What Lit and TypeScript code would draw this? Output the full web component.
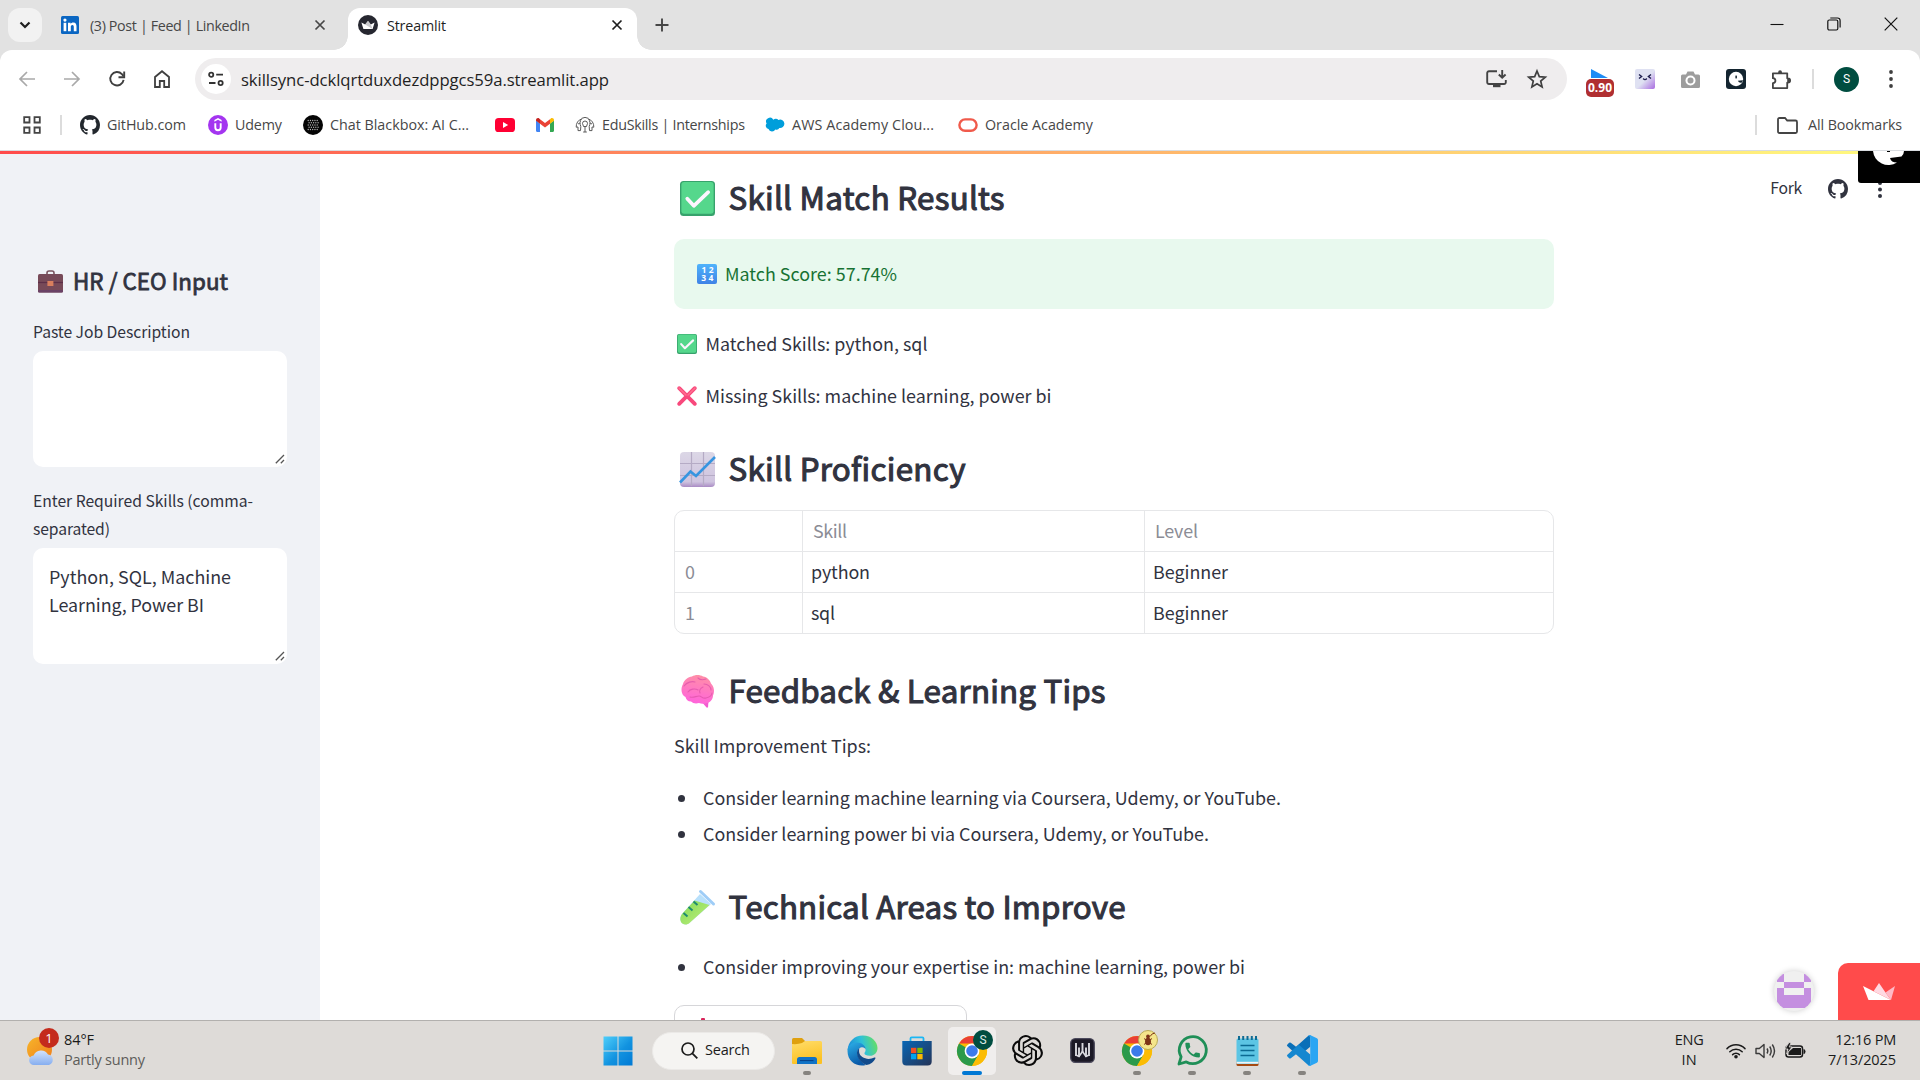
import { LitElement, html, css, svg, TemplateResult, SVGTemplateResult } from "lit";
import { customElement, property, query, state } from "lit/decorators.js";
import { styleMap } from "lit/directives/style-map.js";

/* A single line of text whose tracking is adjusted so that it spans a given width. */
@customElement("fit-text")
class FitText extends LitElement {
  @property() text = "";
  @property({ type: Number }) w = 0;
  @state() private spacing = 0;
  @query("span") private span!: HTMLSpanElement;

  static styles = css`
    :host { display: block; white-space: pre; flex: none; }
    span { display: inline-block; }
  `;

  firstUpdated() {
    const natural = this.span.getBoundingClientRect().width;
    this.spacing = (this.w - natural) / Math.max(1, this.text.length - 1);
  }

  render() {
    return html`<span style=${styleMap({ letterSpacing: `${this.spacing}px` })}>${this.text}</span>`;
  }
}

const fit = (text: string, w: number, cls = "") => html`<fit-text class=${cls} .text=${text} .w=${w}></fit-text>`;

const icon = (w: number, h: number, box: string, body: SVGTemplateResult, cls = ""): TemplateResult =>
  html`<svg class="ic ${cls}" width=${w} height=${h} viewBox=${box} fill="none">${body}</svg>`;

const githubPath =
  "M8 0C3.58 0 0 3.58 0 8c0 3.54 2.29 6.53 5.47 7.59.4.07.55-.17.55-.38 0-.19-.01-.82-.01-1.49-2.01.37-2.53-.49-2.69-.94-.09-.23-.48-.94-.82-1.13-.28-.15-.68-.52-.01-.53.63-.01 1.08.58 1.23.82.72 1.21 1.87.87 2.33.66.07-.52.28-.87.51-1.07-1.78-.2-3.64-.89-3.64-3.95 0-.87.31-1.59.82-2.15-.08-.2-.36-1.02.08-2.12 0 0 .67-.21 2.2.82.64-.18 1.32-.27 2-.27s1.36.09 2 .27c1.53-1.04 2.2-.82 2.2-.82.44 1.1.16 1.92.08 2.12.51.56.82 1.27.82 2.15 0 3.07-1.87 3.75-3.65 3.95.29.25.54.73.54 1.48 0 1.07-.01 1.93-.01 2.2 0 .21.15.46.55.38A8.01 8.01 0 0 0 16 8c0-4.42-3.58-8-8-8z";

const knotPath =
  "M22.2819 9.8211a5.9847 5.9847 0 0 0-.5157-4.9108 6.0462 6.0462 0 0 0-6.5098-2.9A6.0651 6.0651 0 0 0 4.9807 4.1818a5.9847 5.9847 0 0 0-3.9977 2.9 6.0462 6.0462 0 0 0 .7427 7.0966 5.98 5.98 0 0 0 .511 4.9107 6.051 6.051 0 0 0 6.5146 2.9001A5.9847 5.9847 0 0 0 13.2599 24a6.0557 6.0557 0 0 0 5.7718-4.2058 5.9894 5.9894 0 0 0 3.9977-2.9001 6.0557 6.0557 0 0 0-.7475-7.0729zm-9.022 12.6081a4.4755 4.4755 0 0 1-2.8764-1.0408l.1419-.0804 4.7783-2.7582a.7948.7948 0 0 0 .3927-.6813v-6.7369l2.02 1.1686a.071.071 0 0 1 .038.052v5.5826a4.504 4.504 0 0 1-4.4945 4.4944zm-9.6607-4.1254a4.4708 4.4708 0 0 1-.5346-3.0137l.142.0852 4.783 2.7582a.7712.7712 0 0 0 .7806 0l5.8428-3.3685v2.3324a.0804.0804 0 0 1-.0332.0615L9.74 19.9502a4.4992 4.4992 0 0 1-6.1408-1.6464zM2.3408 7.8956a4.485 4.485 0 0 1 2.3655-1.9728V11.6a.7664.7664 0 0 0 .3879.6765l5.8144 3.3543-2.0201 1.1685a.0757.0757 0 0 1-.071 0l-4.8303-2.7865A4.504 4.504 0 0 1 2.3408 7.872zm16.5963 3.8558L13.1038 8.364 15.1192 7.2a.0757.0757 0 0 1 .071 0l4.8303 2.7913a4.4944 4.4944 0 0 1-.6765 8.1042v-5.6772a.79.79 0 0 0-.407-.667zm2.0107-3.0231l-.142-.0852-4.7735-2.7818a.7759.7759 0 0 0-.7854 0L9.409 9.2297V6.8974a.0662.0662 0 0 1 .0284-.0615l4.8303-2.7866a4.4992 4.4992 0 0 1 6.6802 4.66zM8.3065 12.863l-2.02-1.1638a.0804.0804 0 0 1-.038-.0567V6.0742a4.4992 4.4992 0 0 1 7.3757-3.4537l-.142.0805L8.704 5.459a.7948.7948 0 0 0-.3927.6813zm1.0976-2.3654l2.602-1.4998 2.6069 1.4998v2.9994l-2.5974 1.4997-2.6067-1.4997Z";

const phonePath =
  "M6.6 10.8c1.4 2.8 3.8 5.1 6.6 6.6l2.2-2.2c.3-.3.7-.4 1-.2 1.1.4 2.3.6 3.6.6.6 0 1 .4 1 1V20c0 .6-.4 1-1 1-9.4 0-17-7.6-17-17 0-.6.4-1 1-1h3.5c.6 0 1 .4 1 1 0 1.2.2 2.5.6 3.6.1.3 0 .7-.2 1z";

/* ---------- browser icons ---------- */
const closeX = (color: string) => icon(12, 12, "0 0 12 12", svg`<path d="M1.5 1.5l9 9M10.5 1.5l-9 9" stroke=${color} stroke-width="1.7"/>`);
const crownDark = icon(20, 20, "0 0 20 20", svg`
  <circle cx="10" cy="10" r="10" fill="#262730"/>
  <path d="M3.4 7.6l3.8 2L10 6l2.8 3.6 3.8-2-2 6.4H5.4z" fill="#fff"/>
  <path d="M7.2 9.6L10 6l2.8 3.6L14.6 14z" fill="#c9c9cc"/>`);
const linkedIn = icon(18, 18, "0 0 18 18", svg`
  <rect width="18" height="18" rx="1.5" fill="#0a66c2"/>
  <rect x="2.6" y="6.8" width="2.7" height="8.4" fill="#fff"/><circle cx="3.95" cy="4.1" r="1.6" fill="#fff"/>
  <path d="M7 6.8h2.6V8c.5-.8 1.4-1.4 2.7-1.4 2.6 0 3.2 1.7 3.2 4v4.6h-2.7v-4.1c0-1-.1-2.2-1.4-2.2s-1.6 1-1.6 2.1v4.2H7z" fill="#fff"/>`);
const github = (s: number, color: string) => icon(s, s, "0 0 16 16", svg`<path d=${githubPath} fill=${color}/>`);

const udemy = icon(20, 20, "0 0 20 20", svg`
  <circle cx="10" cy="10" r="10" fill="#a435f0"/>
  <path d="M10 3l3.6 2.1v1.7L10 4.8 6.4 6.8V5.1z" fill="#fff"/>
  <path d="M7.3 8.3v4.2a2.7 2.7 0 0 0 5.4 0V8.3" stroke="#fff" stroke-width="1.9"/>`);
const blackbox = icon(20, 20, "0 0 20 20", svg`
  <circle cx="10" cy="10" r="10" fill="#050505"/>
  ${[5.5, 7.75, 10, 12.25, 14.5].map((y, r) =>
    [5.5, 7.75, 10, 12.25, 14.5].map((x) => svg`<circle cx=${x + (r % 2 ? 0.6 : -0.3)} cy=${y} r="0.65" fill="#b9b9b9"/>`))}`);
const youtube = icon(20, 20, "0 0 20 20", svg`<rect y="3" width="20" height="14" rx="3.6" fill="#ff0033"/><path d="M8 7l5.2 3L8 13z" fill="#fff"/>`);
const gmail = icon(20, 20, "0 0 20 20", svg`
  <path d="M1 5.5v10.3c0 .7.5 1.2 1.2 1.2H5V8.5z" fill="#4285f4"/>
  <path d="M19 5.5v10.3c0 .7-.5 1.2-1.2 1.2H15V8.5z" fill="#34a853"/>
  <path d="M15 4.2v4.6l4-3V5c0-1.7-1.9-2.6-3.2-1.6z" fill="#fbbc04"/>
  <path d="M5 8.8V4.2l5 3.8 5-3.8v4.6l-5 3.8z" fill="#ea4335"/>
  <path d="M1 5v.8l4 3V4.2l-.8-.8C2.9 2.4 1 3.3 1 5z" fill="#c5221f"/>`);
const eduskills = icon(20, 20, "0 0 20 20", svg`
  <g stroke="#5a5a5a" stroke-width="1"><path d="M10 17v-6M8.2 17h3.6M7.5 8.5a2.5 2.5 0 1 1 5 0c0 1.2-1 1.6-1 3h-3c0-1.4-1-1.800-1-3z"/>
  <path d="M6.5 4C3.2 5 1 8.2 1.2 12.2L3 12v3.6h2.5l.3-4C4.6 9 4.800 6 6.500 4zM13.500 4c3.300 1 5.500 4.200 5.300 8.200L17 12v3.600h-2.500l-.3-4c1.200-2.600 1-5.600-.7-7.600z"/><path d="M6.500 3.400Q10 1.400 13.500 3.400M3 9l2-1M17 9l-2-1"/></g>`);
const cloud = icon(20, 20, "0 0 20 20", svg`
  <path d="M8.300 4.700A3.500 3.500 0 0 1 13.400 5a4.200 4.200 0 0 1 6 3.800 4.300 4.300 0 0 1-5 4.200 3.200 3.200 0 0 1-4.100 1.400A3.700 3.700 0 0 1 3.500 14 3.300 3.300 0 0 1 1.600 8.500a3.800 3.800 0 0 1 6.700-3.800z" fill="#009edb"/>`);
const oracle = icon(20, 20, "0 0 20 20", svg`<rect x="1.400" y="4.400" width="17.200" height="11.400" rx="5.700" stroke="#f05a4b" stroke-width="2.400"/>`);

/* ---------- pictographs used in the page ---------- */
const checkBox = (s: number) => icon(s, s, "0 0 36 36", svg`
  <rect width="36" height="36" rx="3.600" fill="#37a26c"/><rect x="1.400" y="1" width="33.200" height="32.600" rx="3" fill="#55d78c"/>
  <path d="M7.500 18.200l6.700 7.300L29 11.500" stroke="#fdf5ff" stroke-width="3.800" stroke-linecap="round" stroke-linejoin="round"/>`);
const crossMark = icon(20, 20, "0 0 20 20", svg`
  <path d="M2.200 2.200l15.600 15.600M17.800 2.200L2.200 17.800" stroke="#f8487c" stroke-width="3.900" stroke-linecap="round"/>
  <path d="M2 2l7 7M18 2l-7 7" stroke="#ff6f8e" stroke-width="1.500" stroke-linecap="round"/>`);
const numbers = html`<svg class="ic digits" width="20" height="20" viewBox="0 0 20 20">
  <defs><linearGradient id="num" x1="0" y1="0" x2="0" y2="1"><stop offset="0" stop-color="#4fb3fb"/><stop offset="1" stop-color="#3f83e6"/></linearGradient></defs>
  <rect width="20" height="20" rx="2" fill="url(#num)"/>
  <text x="4.600" y="9">1</text><text x="11.800" y="9">2</text><text x="4.300" y="17.200">3</text><text x="11.500" y="17.200">4</text></svg>`;
const chart = html`<svg class="ic" width="35" height="35" viewBox="0 0 35 35" fill="none">
  <defs><linearGradient id="ch" x1="0" y1="0" x2="0" y2="1"><stop offset="0" stop-color="#dcd7e6"/><stop offset=".85" stop-color="#cfc4df"/><stop offset="1" stop-color="#a98bc4"/></linearGradient></defs>
  <rect width="35" height="35" rx="4" fill="url(#ch)"/>
  <path d="M11.500 0v34M23.500 0v34M0 11.500h35M0 23.500h35" stroke="#b5abc5" stroke-width="1.200"/>
  <path d="M0 30.500L10.500 19.500l5.500 4.500L35 5" stroke="#3795e0" stroke-width="2.600"/></svg>`;
const brain = html`<svg class="ic" width="35" height="35" viewBox="0 0 35 35" fill="none">
  <defs><linearGradient id="br" x1="0.600" y1="0" x2="0.400" y2="1"><stop offset="0" stop-color="#ff8fa6"/><stop offset="1" stop-color="#ff63dc"/></linearGradient></defs>
  <path d="M21 27l5.500 6.500h1.500l.5-6.500z" fill="#f25bd0"/>
  <path d="M12 2.500C15 .5 20 .5 23 2.500c4 .5 7 3.500 8 7 3 3 4 8 2 12 0 4-3 7-6 7.500-3 1.200-6 1-8 0-3 1-6 .5-8-1.500-3 0-5-2-5.500-4.500C1 21 .5 14 3 10c1-4 5-7 9-7.500z" fill="url(#br)"/>
  <path d="M8 18c2-3 7-4 10-2M4 12c3-4 8-5 11-4M18 4c2 2 5 2 8 1M24 10c4 0 7 3 7 6M10 23c4 1 6-1 9-1s3 3 7 2 6-3 6-5M23 13c-3 1-4 4-3 6" stroke="#e055aa" stroke-width="1.100" stroke-linecap="round" opacity=".8"/></svg>`;
const testTube = html`<svg class="ic" width="35" height="35" viewBox="0 0 35 35" fill="none">
  <defs><linearGradient id="tt" x1="0" y1="0" x2="1" y2="1"><stop offset="0" stop-color="#7fd957"/><stop offset="1" stop-color="#c4f07c"/></linearGradient></defs>
  <path d="M20 4L31 14 10 32.500C7 35.500 2.500 35 1 32s-.5-6 1-8z" fill="#b8e0fb"/>
  <path d="M14.500 10.500L29.500 15 10 32.500C7 35.500 2.500 35 1 32s-.5-6 1-8z" fill="url(#tt)"/>
  <path d="M20.500 1.500l13 12.500" stroke="#9fcdf7" stroke-width="3" stroke-linecap="round"/>
  <path d="M13.500 11.500l4 3.500M8.500 17l4 3.500M3.500 23l4 3.500" stroke="#1d8a71" stroke-width="1.900"/></svg>`;
const briefcase = icon(25, 23, "0 0 25 23", svg`
  <path d="M9 4.500V3a2 2 0 0 1 2-2h3a2 2 0 0 1 2 2v1.500" stroke="#7a5560" stroke-width="1.600"/>
  <rect y="4" width="25" height="18.500" rx="1.600" fill="#774a58"/><path d="M0 12.500h25" stroke="#5d3048" stroke-width="1.200"/>
  <rect y="20" width="25" height="2.500" rx="1.200" fill="#6a4266"/><rect x="9.400" y="11" width="6" height="5" fill="#d97f5e"/>`);
const grip = icon(10, 10, "0 0 10 10", svg`<path d="M.8 9.200L9 1M5.800 9.200L9 6" stroke="#555" stroke-width="1.300"/>`, "grip");

/* ---------- taskbar icons ---------- */
const win = html`<svg class="ic" width="30" height="30" viewBox="0 0 30 30">
  <defs><linearGradient id="wn" gradientUnits="userSpaceOnUse" x1="0" y1="0" x2="30" y2="30"><stop offset="0" stop-color="#50d0fb"/><stop offset=".55" stop-color="#1293e0"/><stop offset="1" stop-color="#0078d4"/></linearGradient></defs>
  <path d="M.5.5h14v14H.5zM15.500.5h14v14h-14zM.5 15.500h14v14H.5zM15.500 15.500h14v14h-14z" fill="url(#wn)"/></svg>`;
const explorer = html`<svg class="ic" width="30" height="30" viewBox="0 0 30 30">
  <defs><linearGradient id="fx" x1="0" y1="0" x2="0.300" y2="1"><stop offset="0" stop-color="#ffdd6b"/><stop offset="1" stop-color="#fcc122"/></linearGradient></defs>
  <path d="M0 3.500Q0 2 1.500 2H10l3 3v5H0z" fill="#dfa00f"/><path d="M0 8q6 .5 10-1l3-2h15.500Q30 5 30 6.500v20.500q0 1-1 1H1q-1 0-1-1z" fill="url(#fx)"/>
  <path d="M5 28v-4.500Q5 21 7.500 21h15q2.500 0 2.500 2.500V28z" fill="#1173c6"/><path d="M8 24.600h13.500" stroke="#083f85" stroke-width="1"/></svg>`;
const edge = html`<svg class="ic" width="31" height="31" viewBox="0 0 31 31">
  <defs>
    <linearGradient id="e1" x1="0" y1="0.500" x2="1" y2="0.300"><stop offset="0" stop-color="#1c8bd9"/><stop offset=".5" stop-color="#2fc1d8"/><stop offset="1" stop-color="#68e05d"/></linearGradient>
    <linearGradient id="e2" x1="0" y1="0" x2="0.400" y2="1"><stop offset="0" stop-color="#2cb0e8"/><stop offset="1" stop-color="#0a59a8"/></linearGradient>
  </defs>
  <path d="M.6 15.500C1 6.500 7.500.5 15.800.5c9 0 14.700 6.500 14.700 12.500 0 4.800-3.300 7.800-7.600 7.800-3.600 0-5.500-1.300-5.500-2.500 0-.9 1.200-1.300 1.200-3.600C18.600 11.500 14.500 9 10 9 5.500 9 2 11.500.6 15.500z" fill="url(#e1)"/>
  <path d="M.5 16C.5 11 4.500 7.600 9.800 7.600c4.700 0 8.600 2.900 8.800 6.700-.8-1.500-2.300-2.200-3.800-2-3 .4-4.800 3.300-4.300 6.700.6 4.300 3.800 8.500 8.500 11-8.500 2.500-18.500-3-18.500-14z" fill="url(#e2)"/>
  <path d="M12.300 13.300c-2 1.500-2.800 4-2 7 1.100 4.600 5 8.300 9.200 9.700 4.300-.8 7.400-3.600 8.900-6.600.3-.8-.4-1.200-1-.8-6 3-14.500.7-15.300-5.500-.1-1.400-.1-2.600.2-3.800z" fill="#114a8b"/></svg>`;
const store = html`<svg class="ic" width="30" height="30" viewBox="0 0 30 30" fill="none">
  <defs><linearGradient id="st" x1="0" y1="0" x2="1" y2="1"><stop offset="0" stop-color="#0866b5"/><stop offset="1" stop-color="#253457"/></linearGradient></defs>
  <path d="M8.500 6V2.500Q8.500 1.300 9.700 1.300h10.600q1.200 0 1.200 1.200V6" stroke="#1cb7f4" stroke-width="1.800"/>
  <path d="M.3 5h29.400v20.500q0 4-4 4H4.300q-4 0-4-4z" fill="url(#st)"/>
  <path d="M9 11.800h5.300v5.300H9z" fill="#f25022"/><path d="M15.300 11.800h5.300v5.300h-5.300z" fill="#7fba00"/><path d="M9 18h5.300v5.300H9z" fill="#00a4ef"/><path d="M15.300 18h5.300v5.300h-5.300z" fill="#ffb900"/></svg>`;
const chrome = icon(30, 30, "0 0 30 30", svg`
  <circle cx="15" cy="15" r="15" fill="#fbbc04"/>
  <path d="M2 7.500a15 15 0 0 1 26 0H15z" fill="#ea3f35"/>
  <path d="M2 7.500A15 15 0 0 0 15 30l6.500-11.300L15 15z" fill="#2b9a4b"/><path d="M28 7.500H15l6.500 11.200L15 30A15 15 0 0 0 28 7.500z" fill="#fbbc04"/>
  <circle cx="15" cy="15" r="7.400" fill="#fff"/><circle cx="15" cy="15" r="5.800" fill="#3b7bea"/>`);
const openAi = icon(31, 31, "0 0 24 24", svg`<path d=${knotPath} fill="#0b0b0b"/>`);
const wApp = icon(25, 25, "0 0 25 25", svg`
  <rect x=".7" y=".7" width="23.600" height="23.600" rx="4.500" fill="#1b1926" stroke="#4c4a5c" stroke-width="1.300"/>
  <path d="M6 5v13M9 9.500v9.500M12.500 5v9M16 9.500v9.500M19 5v13" stroke="#d8d8de" stroke-width="1.900"/><path d="M6 17l3 1.500 3.500-5 3.500 5 3-1.500" stroke="#d8d8de" stroke-width="1.600"/>`);
const whatsapp = icon(31, 31, "0 0 31 31", svg`
  <path d="M2 29l2.100-7.200A13.500 13.500 0 1 1 9.300 26.900z" stroke="#1f8f57" stroke-width="2.800" stroke-linejoin="round"/>
  <g transform="translate(5.900 5.400) scale(.81)"><path d=${phonePath} fill="#1f8f57"/></g>`);
const notepad = icon(23, 30, "0 0 23 30", svg`
  <rect x=".5" y="25" width="22" height="5" rx="1.500" fill="#a54a12"/><rect x=".5" y="2.500" width="22" height="25.500" rx="1.600" fill="#5cc5e4"/>
  <rect x=".5" y="25.800" width="22" height="1.800" fill="#f2f4f5"/>
  <path d="M3 0v4M7.200 0v4M11.500 0v4M15.800 0v4M20 0v4" stroke="#0f6b93" stroke-width="2" />
  <path d="M4.500 9.500h14M4.500 14.500h14M4.500 19.500h14" stroke="#0b6a92" stroke-width="1.600"/>`);
const vscode = icon(31, 31, "0 0 24 24", svg`
  <path d="M18.200.2L16.500.5 7 9.130 2.925 6a1 1 0 0 0-1.276.057L.327 7.261A1 1 0 0 0 .326 8.740L3.900 12l5.200 4.500L18 9z" fill="#0a6fb8"/>
  <path d="M18.200 23.800l-1.700-.3L7 14.870 2.925 18a1 1 0 0 1-1.276-.057L.327 16.740a1 1 0 0 1 0-1.480L3.900 12l5.200-4.500L18 15z" fill="#1587d0"/>
  <path d="M23.150 2.587L18.210.21a1.494 1.494 0 0 0-1.705.29l-.3.300c.6-.2 1.800.2 1.800 1.200v20c0 1-1.200 1.400-1.800 1.200l.3.300a1.492 1.492 0 0 0 1.704.290l4.942-2.377A1.500 1.500 0 0 0 24 20.060V3.939a1.500 1.500 0 0 0-.85-1.352z" fill="#2aa5f3"/>`);

const bookmarks: { icon: TemplateResult; label?: string; w?: number; slot: number }[] = [
  { icon: github(20, "#22272d"), label: "GitHub.com", w: 79, slot: 128 },
  { icon: udemy, label: "Udemy", w: 47, slot: 95 },
  { icon: blackbox, label: "Chat Blackbox: AI C...", w: 139, slot: 192 },
  { icon: youtube, slot: 40 },
  { icon: gmail, slot: 40 },
  { icon: eduskills, label: "EduSkills | Internships", w: 143, slot: 190 },
  { icon: cloud, label: "AWS Academy Clou...", w: 142, slot: 193 },
  { icon: oracle, label: "Oracle Academy", w: 108, slot: 150 },
];

@customElement("app-root")
class AppRoot extends LitElement {
  static styles = css`
    :host { display: block; width: 1920px; height: 1080px; overflow: hidden; background: #e2e2e2; color: #1f1f1f;
      font-family: "Open Sans", "Noto Sans", sans-serif; }
    * { box-sizing: border-box; }
    .ic { display: block; flex: none; overflow: visible; }
    .row { display: flex; align-items: center; }

    .tabs { height: 50px; padding: 8px 0 0 8px; display: flex; align-items: flex-start; font-size: 14.300px; line-height: 20px; }
    .tabs .chev { width: 34px; height: 34px; border-radius: 12px; background: #f2f2f2; justify-content: center; }
    .tab { height: 34px; width: 306px; padding: 0 22px 0 19px; color: #474747; }
    .tab fit-text, .active fit-text { flex: 1; padding-top: 1px; }
    .tab .ic:first-child { margin-right: 11px; }
    .active { position: relative; width: 289px; height: 42px; padding: 0 14px 8px 10px; background: #fff; border-radius: 12px 12px 0 0; }
    .active .ic:first-child { margin-right: 9px; }
    .active::before, .active::after { content: ""; position: absolute; bottom: 0; width: 14px; height: 14px; }
    .active::before { left: -14px; background: radial-gradient(circle at 0 0, transparent 13.500px, #fff 14px); }
    .active::after { right: -14px; background: radial-gradient(circle at 100% 0, transparent 13.500px, #fff 14px); }
    .plus { margin: 10px 0 0 18px; }
    .winctl { margin: 9px 22px 0 auto; gap: 43px; }

    .chromebar { height: 101px; background: #fff; border-radius: 12px 12px 0 0; border-bottom: 1px solid #d9dce0; }
    .tools { height: 58px; padding-left: 17px; }
    .tools > .nav { margin-right: 25px; }
    .omni { width: 1372px; height: 42px; margin-left: -2px; border-radius: 21px; background: #efedee; padding: 0 20px 0 6px; font-size: 16.700px; line-height: 24px; }
    .site { width: 30px; height: 30px; border-radius: 50%; background: #fff; justify-content: center; margin-right: 10px; }
    .omni fit-text { flex: 1; padding-top: 2px; }
    .omni .install { margin-right: 20px; }
    .exts { padding-left: 19px; }
    .ext90 { position: relative; width: 29px; height: 28px; margin-right: 20px; }
    .ext90 .ic { position: absolute; left: 5px; top: 4px; }
    .badge90 { position: absolute; left: 0; top: 14px; width: 28px; height: 18px; border-radius: 5px; background: #b02f31; color: #fff;
      font-size: 12px; font-weight: 700; line-height: 18px; text-align: center; }
    .face { margin-right: 26px; }
    .face.last { margin-right: 25px; }
    .avatar { width: 25px; height: 25px; border-radius: 50%; background: #004d40; color: #fff; font: 12px/25px Roboto, sans-serif; text-align: center; }
    .vline { flex: none; width: 2px; height: 20px; background: #dcdcdc; }
    .exts .vline { margin: 0 20px 0 20px; }
    .exts .more { margin-left: 30px; }

    .marks { height: 34px; padding: 0 18px 0 23px; font-size: 14.300px; line-height: 20px; color: #474747; }
    .marks .vline { margin: 0 18px 0 19px; }
    .mark { flex: none; gap: 7px; }
    .allmarks { margin-left: auto; }
    .allmarks .vline { margin: 0 20px 0 0; }
    .allmarks fit-text { margin-left: 10px; }

    .page { position: relative; display: flex; height: 869px; overflow: hidden; background: #fff; color: #31333f;
      font-family: "Noto Sans CJK JP", "Noto Sans CJK SC", sans-serif; font-size: 17.900px; line-height: 30px; }
    .page fit-text { position: relative; top: -1px; }
    .strip { position: absolute; left: 0; top: 0; width: 1920px; height: 3px; background: linear-gradient(90deg, #ff4b4b, #fffd80); }
    .side { width: 320px; padding: 110px 33px 0; background: #f0f2f6; font-size: 15.700px; line-height: 28px; }
    .side h3 { margin: 0 0 18px 5px; font-size: 22.400px; line-height: 40px; font-weight: 400; gap: 10px; -webkit-text-stroke: 0.800px #31333f; }
    .side .lab { height: 28px; }
    .area { position: relative; width: 254px; height: 116px; margin: 4px 0 21px; border-radius: 10px; background: #fff; padding: 15px 16px; font-size: 17.900px; line-height: 28px; }
    .area .grip { position: absolute; right: 2px; bottom: 3px; }

    .main { width: 880px; margin-left: 354px; padding-top: 26px; }
    h2 { margin: 0; height: 42px; padding-left: 6px; gap: 13.500px; font-size: 31.300px; line-height: 42px; font-weight: 400; -webkit-text-stroke: 1.100px #31333f; }
    .alert { height: 70px; margin: 20px 0; padding-left: 23px; gap: 8px; border-radius: 10px; background: #e8f9ee; color: #177233; }
    .digits text { font: 700 8.500px "Open Sans", sans-serif; fill: #fff; }
    .line { padding-left: 3px; gap: 8.500px; height: 30px; }
    .missing { margin: 22px 0 37px; }
    .table { display: grid; grid-template-columns: 128px 342px 1fr; grid-auto-rows: 41px; margin: 20px 0 36px; height: 124px; border: 1px solid #e6e7e9; border-radius: 10px; overflow: hidden; }
    .cell { padding-left: 8px; line-height: 40px; border-right: 1px solid #e6e7e9; border-bottom: 1px solid #e6e7e9; }
    .cell:nth-child(3n) { border-right: 0; }
    .cell:nth-child(n + 7) { border-bottom: 0; }
    .cell.dim { color: #8b8c95; padding-left: 10px; }
    .tips { margin: 19px 0 22px; height: 30px; }
    .li { height: 30px; gap: 18px; padding-left: 4px; margin-bottom: 6px; }
    .li::before { content: ""; width: 7px; height: 7px; border-radius: 50%; background: #31333f; }
    .tech { margin-bottom: 24px; }
    .tips + .li + .li { margin-bottom: 37px; }
    .btn { width: 293px; height: 50px; margin-top: 23px; border: 1px solid #d6d6d9; border-radius: 10px; padding: 12px 0 0 26px; }
    .pin { width: 4px; height: 6px; background: #d8265b; border-radius: 1px; }

    .fork { position: absolute; right: 38px; top: 23px; font-size: 15.700px; line-height: 30px; }
    .fork .ic { margin-left: 26px; }
    .fork .dots { margin-left: 30px; }
    .ghost { position: absolute; right: 0; top: 0; width: 62px; height: 32px; background: #000; border-radius: 0 0 0 3px; }
    .host { position: absolute; left: 1838px; top: 812px; width: 82px; height: 57px; background: #ff4b4b; border-radius: 10px 0 0 0; justify-content: center; }
    .who { position: absolute; left: 1774px; top: 820px; width: 40px; height: 40px; border-radius: 50%; background: #f0f0f0; box-shadow: 0 0 6px rgba(0, 0, 0, 0.2); overflow: hidden; }

    .task { position: relative; height: 60px; border-top: 1px solid #b2b0ae; background: #dedbd8; color: #1b1b1b; font-size: 14.500px; line-height: 20px; }
    .task fit-text { position: relative; top: -1px; }
    .weather { padding-left: 27px; gap: 9px; width: 603px; }
    .weather .soft { color: #5d5c5a; }
    .wicon { position: relative; }
    .wbadge { position: absolute; left: 12px; top: -9px; width: 20px; height: 20px; border-radius: 50%; background: #c42b1c; color: #fff; font-size: 13px; line-height: 20px; text-align: center; }
    .search { width: 123px; height: 38px; margin: 0 8px 0 19px; border-radius: 19px; background: #f5f4f2; padding-left: 28px; gap: 7px; border: 1px solid #ebe9e7; }
    .app { position: relative; width: 48px; height: 48px; margin-right: 7px; border-radius: 5px; justify-content: center; }
    .app.on { background: #f0eeed; }
    .app.run::after { content: ""; position: absolute; left: 20px; bottom: 0; width: 8px; height: 4px; border-radius: 2px; background: #86837f; }
    .app.on::after { left: 14px; width: 20px; background: #0078d4; }
    .pbadge { position: absolute; left: 25px; top: 3px; width: 20px; height: 20px; border-radius: 50%; background: #004d40; color: #dfe9e6; font: 12px/20px Roboto, sans-serif; text-align: center; }
    .pbadge.gold { background: #f4e58a; border: 1px solid #b9ab55; }
    .tray { margin-left: auto; padding-right: 24px; }
    .lang { width: 30px; margin-right: 22px; display: flex; flex-direction: column; align-items: center; }
    .tray .ic { margin-right: 9px; }
    .clock { margin-left: 13px; display: flex; flex-direction: column; align-items: flex-end; }
  `;

  private heading(pic: TemplateResult, text: string, w: number, cls = "") {
    return html`<h2 class="row ${cls}">${pic}${fit(text, w)}</h2>`;
  }

  private tabs() {
    return html`<div class="tabs">
      <div class="row chev">${icon(12, 8, "0 0 12 8", svg`<path d="M1.500 1.500L6 6l4.500-4.500" stroke="#1f1f1f" stroke-width="2.200"/>`)}</div>
      <div class="row tab">${linkedIn}${fit("(3) Post | Feed | LinkedIn", 160)}${closeX("#474747")}</div>
      <div class="row active">${crownDark}${fit("Streamlit", 59)}${closeX("#1f1f1f")}</div>
      <div class="plus">${icon(14, 14, "0 0 14 14", svg`<path d="M7 .5v13M.5 7h13" stroke="#474747" stroke-width="1.900"/>`)}</div>
      <div class="row winctl">
        ${icon(14, 14, "0 0 14 14", svg`<path d="M.5 7.500h13" stroke="#111" stroke-width="1.100"/>`)}
        ${icon(14, 14, "0 0 14 14", svg`<rect x=".8" y="3" width="10" height="10" rx="1.500" stroke="#111" stroke-width="1.200"/><path d="M3.300 1h7.200q2.600 0 2.600 2.600v7" stroke="#111" stroke-width="1.200"/>`)}
        ${icon(14, 14, "0 0 14 14", svg`<path d="M.7.7l12.600 12.600M13.300.7L.7 13.300" stroke="#111" stroke-width="1.200"/>`)}
      </div>
    </div>`;
  }

  private toolbar() {
    return html`<div class="row tools">
        ${icon(20, 20, "0 0 20 20", svg`<path d="M18 10H3.500M10 3L3 10l7 7" stroke="#a9a9a9" stroke-width="1.700"/>`, "nav")}
        ${icon(20, 20, "0 0 20 20", svg`<path d="M2 10h14.500M10 3l7 7-7 7" stroke="#a9a9a9" stroke-width="1.700"/>`, "nav")}
        ${icon(20, 20, "0 0 20 20", svg`<path d="M16.600 10.800A6.700 6.700 0 1 1 14.900 5.200L16.500 7" stroke="#3f3f3f" stroke-width="1.900"/><path d="M17.200 2.500v5.700h-5.700" stroke="#3f3f3f" stroke-width="1.900"/>`, "nav")}
        ${icon(20, 20, "0 0 20 20", svg`<path d="M3 8l7-5.800L17 8v10h-4.800v-6H7.800v6H3z" stroke="#3f3f3f" stroke-width="1.800"/>`, "nav")}
        <div class="row omni">
          <div class="row site">${icon(16, 16, "0 0 16 16", svg`<g stroke="#333" stroke-width="1.800"><circle cx="3.200" cy="3.700" r="2.100"/><path d="M8.200 3.700H15M1 12h6.500"/><circle cx="12.600" cy="12" r="2.100"/></g>`)}</div>
          ${fit("skillsync-dcklqrtduxdezdppgcs59a.streamlit.app", 368)}
          ${icon(21, 20, "0 0 21 20", svg`<path d="M11 2.200H3a1.800 1.800 0 0 0-1.800 1.800v9.200A1.800 1.800 0 0 0 3 15h15a1.800 1.800 0 0 0 1.800-1.800V11" stroke="#444" stroke-width="1.900"/><path d="M16.200 1v7M12.800 5.500l3.400 3.300 3.400-3.300" stroke="#444" stroke-width="1.900"/><path d="M7 15.500h7.500v2.700H7z" fill="#444"/>`, "install")}
          ${icon(20, 20, "0 0 20 20", svg`<path d="M10 2l2.300 5.600 6 .5-4.600 3.900 1.400 5.900L10 14.700l-5.100 3.200L6.300 12 1.700 8.100l6-.5z" stroke="#3f3f3f" stroke-width="1.700"/>`)}
        </div>
        <div class="row exts">
          <div class="ext90">${icon(17, 9, "0 0 17 9", svg`<path d="M0 0l17 9H0z" fill="#1e8cf5"/>`)}<span class="badge90">0.90</span></div>
          ${icon(20, 20, "0 0 20 20", svg`<defs><linearGradient id="fc" x1=".2" y1=".2" x2="1" y2="1"><stop offset=".4" stop-color="#dfe1f2"/><stop offset="1" stop-color="#a86be0"/></linearGradient></defs><rect width="20" height="20" rx="2" fill="url(#fc)"/><path d="M4 5.500l2.600 2L4 9.500M16 5.500l-2.600 2 2.600 2M8.200 9.500q1.800 2.200 3.600 0" stroke="#1d1d4d" stroke-width="1.400"/>`, "face")}
          ${icon(19, 17, "0 0 19 17", svg`<path d="M1.500 3.500H5L6.500.5h6L14 3.500h3.500Q19 3.500 19 5v10.500q0 1.500-1.500 1.500h-16Q0 17 0 15.500V5q0-1.500 1.500-1.500z" fill="#9d9d9d"/><circle cx="9.500" cy="9.500" r="5" fill="#fff"/><circle cx="9.500" cy="9.500" r="3" fill="#9d9d9d"/>`, "face")}
          ${icon(20, 20, "0 0 20 20", svg`<rect width="20" height="20" rx="3" fill="#142530"/><circle cx="10" cy="10" r="7.200" fill="#fff"/><path d="M17 11.200l-5.200.6q1.200 2.400 4.200 1.700" fill="#142530"/><rect x="9.400" y="6.600" width="1.500" height="2.800" fill="#142530"/>`, "face last")}
          ${icon(21, 21, "0 0 22 22", svg`<path d="M2 4.500H17v5.300h.8a2.200 2.200 0 0 1 0 4.400H17V20H2v-5.200c3.500-.4 3.500-4.800 0-5.200z" stroke="#444" stroke-width="1.900" stroke-linejoin="round"/><path d="M7.500 4.500V3.300a2 2 0 0 1 4 0v1.200zM17 9.800h1.300a2.200 2.200 0 0 1 0 4.400H17z" fill="#444"/>`)}
          <span class="vline"></span>
          <div class="avatar">S</div>
          ${icon(4, 18, "0 0 4 18", svg`<g fill="#3f3f3f"><circle cx="2" cy="2" r="1.900"/><circle cx="2" cy="9" r="1.900"/><circle cx="2" cy="16" r="1.900"/></g>`, "more")}
        </div>
      </div>`;
  }

  private marks() {
    return html`<div class="row marks">
      ${icon(18, 18, "0 0 18 18", svg`<path d="M1.200 1.200h5.300v5.300H1.200zM11.500 1.200h5.300v5.300h-5.300zM1.200 11.500h5.300v5.300H1.200zM11.500 11.500h5.300v5.300h-5.300z" stroke="#444" stroke-width="1.800"/>`)}
      <span class="vline"></span>
      ${bookmarks.map((b) => html`<div class="row mark" style=${styleMap({ width: `${b.slot}px` })}>${b.icon}${b.label ? fit(b.label, b.w!) : ""}</div>`)}
      <div class="row allmarks"><span class="vline"></span>
        ${icon(21, 17, "0 0 21 17", svg`<path d="M1 2.500Q1 1 2.500 1H8l2.200 2.500h8.300Q20 3.500 20 5v9.500q0 1.500-1.500 1.500h-16Q1 16 1 14.500z" stroke="#444" stroke-width="1.800"/>`)}
        ${fit("All Bookmarks", 94)}
      </div>
    </div>`;
  }

  private page() {
    const cells = [["", "Skill", "Level"], ["0", "python", "Beginner"], ["1", "sql", "Beginner"]];
    const widths: Record<string, number> = { Skill: 34, Level: 43, python: 59, sql: 24, Beginner: 75, "0": 10, "1": 10 };
    return html`<div class="page">
      <div class="side">
        <h3 class="row">${briefcase}${fit("HR / CEO Input", 155)}</h3>
        <div class="lab">${fit("Paste Job Description", 157)}</div>
        <div class="area">${grip}</div>
        <div class="lab">${fit("Enter Required Skills (comma-", 220)}</div>
        <div class="lab">${fit("separated)", 77)}</div>
        <div class="area">${fit("Python, SQL, Machine", 182)}${fit("Learning, Power BI", 155)}${grip}</div>
      </div>
      <div class="main">
        ${this.heading(checkBox(35), "Skill Match Results", 276)}
        <div class="row alert">${numbers}${fit("Match Score: 57.74%", 172)}</div>
        <div class="row line">${checkBox(20)}${fit("Matched Skills: python, sql", 222)}</div>
        <div class="row line missing">${crossMark}${fit("Missing Skills: machine learning, power bi", 346)}</div>
        ${this.heading(chart, "Skill Proficiency", 237)}
        <div class="table">
          ${cells.map((r, y) => r.map((c, x) => html`<div class="cell ${y === 0 || x === 0 ? "dim" : ""}">${c ? fit(c, widths[c]) : ""}</div>`))}
        </div>
        ${this.heading(brain, "Feedback & Learning Tips", 377)}
        <div class="tips">${fit("Skill Improvement Tips:", 197)}</div>
        <div class="row li">${fit("Consider learning machine learning via Coursera, Udemy, or YouTube.", 578)}</div>
        <div class="row li">${fit("Consider learning power bi via Coursera, Udemy, or YouTube.", 506)}</div>
        ${this.heading(testTube, "Technical Areas to Improve", 397, "tech")}
        <div class="row li">${fit("Consider improving your expertise in: machine learning, power bi", 542)}</div>
        <div class="btn"><div class="pin"></div></div>
      </div>
      <div class="strip"></div>
      <div class="row fork">${fit("Fork", 32)}${github(20, "#31333f")}
        ${icon(4, 20, "0 0 4 20", svg`<circle cx="2" cy="4" r="2" fill="#31333f"/><circle cx="2" cy="10.500" r="2" fill="#31333f"/><circle cx="2" cy="17" r="2" fill="#31333f"/>`, "dots")}</div>
      <div class="ghost">${icon(62, 32, "0 0 62 32", svg`<path d="M15 0a15.500 15.500 0 0 0 24 11.500q-6 0-7-4.500l11.500-1.500Q46 3 46 0z" fill="#fff"/><path d="M29 0h3v1h-3z" fill="#000"/>`)}</div>
      <div class="who">${icon(40, 40, "0 0 40 40", svg`<g fill="#c48fe0"><path d="M3 3h7v8H3zM30 3h7v8h-7zM10 11h20v6H10zM3 17h7v7h20v-7h7v15l-5 5H8l-5-5z"/></g>`)}</div>
      <div class="row host">${icon(32, 17, "0 0 32 17", svg`<path d="M0 3l28 14H5.500z" fill="#fff"/><path d="M10.500 8.300L16 0l6.500 9.500L28 17z" fill="#ffd9e2"/><path d="M32 3l-9.500 6.500L28 17z" fill="#ffb9c6"/>`)}</div>
    </div>`;
  }

  private taskbar() {
    const app = (i: TemplateResult, cls = "", badge: TemplateResult | string = "") => html`<div class="row app ${cls}">${i}${badge}</div>`;
    return html`<div class="row task">
      <div class="row weather">
        <div class="wicon">${icon(28, 28, "0 0 28 28", svg`<defs><linearGradient id="sn" x1="0" y1="0" x2="1" y2="1"><stop offset="0" stop-color="#f7b52a"/><stop offset="1" stop-color="#ef7d1c"/></linearGradient><linearGradient id="cl" x1="0" y1="0" x2="0" y2="1"><stop offset="0" stop-color="#d3e3fb"/><stop offset="1" stop-color="#86aef0"/></linearGradient></defs><circle cx="12.500" cy="12.500" r="12.500" fill="url(#sn)"/><path d="M7 28a4.700 4.700 0 0 1-.4-9.400A8 8 0 0 1 21 17.500 5.400 5.400 0 0 1 22 28z" fill="url(#cl)"/>`)}<span class="wbadge">1</span></div>
        <div>${fit("84°F", 30)}${fit("Partly sunny", 81, "soft")}</div>
      </div>
      ${win}
      <div class="row search">${icon(17, 17, "0 0 17 17", svg`<circle cx="7" cy="7" r="6" stroke="#1b1b1b" stroke-width="1.700"/><path d="M11.300 11.300l5 5" stroke="#1b1b1b" stroke-width="1.800"/>`)}${fit("Search", 45)}</div>
      ${app(explorer, "run")}${app(edge)}${app(store)}
      ${app(chrome, "run on", html`<span class="pbadge">S</span>`)}
      ${app(openAi)}${app(wApp)}
      ${app(chrome, "run", html`<span class="pbadge gold">${icon(18, 18, "0 0 18 18", svg`<ellipse cx="9" cy="10.500" rx="3" ry="3.800" fill="#7d3418"/><circle cx="9" cy="5.500" r="1.900" fill="#7d3418"/><path d="M5 7.500l8 6M13 7.500l-8 6M11 5.500q2-3.500 5-3.500" stroke="#7d3418" stroke-width="1"/>`)}</span>`)}
      ${app(whatsapp, "run")}${app(notepad, "run")}${app(vscode, "run")}
      <div class="row tray">
        <div class="lang">${fit("ENG", 29)}${fit("IN", 15)}</div>
        ${icon(20, 16, "0 0 20 16", svg`<g stroke="#1b1b1b" stroke-width="1.500" stroke-linecap="round"><path d="M1 5.600a12.700 12.700 0 0 1 18 0M3.800 8.700a8.800 8.800 0 0 1 12.400 0M6.600 11.600a4.800 4.800 0 0 1 6.800 0"/></g><circle cx="10" cy="13.800" r="1.800" fill="#1b1b1b"/>`)}
        ${icon(21, 16, "0 0 21 16", svg`<g stroke="#3a3a3a" stroke-width="1.400"><path d="M1 5.500h3.300L9 1.500v13l-4.700-4H1z" stroke-linejoin="round"/><path d="M12 5.500q1.700 2.500 0 5M14.700 3.500q3 4.500 0 9M17.300 1.500q4.400 6.500 0 13"/></g>`)}
        ${icon(21, 16, "0 0 21 16", svg`<rect x="1" y="3" width="16.500" height="11" rx="2.500" stroke="#1b1b1b" stroke-width="1.500"/><path d="M8 5h8v7H3.500V9z" fill="#1b1b1b"/><path d="M18.500 6q2 0 2 2.500t-2 2.500z" fill="#1b1b1b"/><path d="M4-.5L0 6h3l-1.300 5L7 4H4.200L6 0z" fill="#1b1b1b" stroke="#dedbd8" stroke-width=".8"/>`)}
        <div class="clock">${fit("12:16 PM", 61)}${fit("7/13/2025", 68)}</div>
      </div>
    </div>`;
  }

  render() {
    return html`
      ${this.tabs()}
      <div class="chromebar">${this.toolbar()}${this.marks()}</div>
      ${this.page()}
      ${this.taskbar()}
    `;
  }
}
